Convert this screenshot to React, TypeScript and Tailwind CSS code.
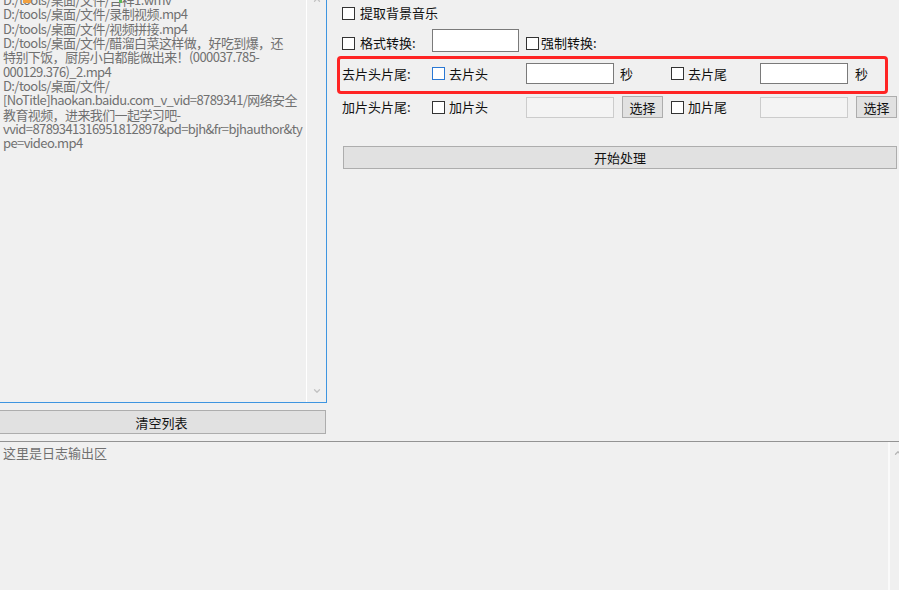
import { ChevronUp, ChevronDown } from 'lucide-react';

const listLines = [
  'D:/tools/桌面/文件/吉祥1.wmv',
  'D:/tools/桌面/文件/录制视频.mp4',
  'D:/tools/桌面/文件/视频拼接.mp4',
  'D:/tools/桌面/文件/醋溜白菜这样做，好吃到爆，还',
  '特别下饭，厨房小白都能做出来！(000037.785-',
  '000129.376)_2.mp4',
  'D:/tools/桌面/文件/',
  '[NoTitle]haokan.baidu.com_v_vid=8789341/网络安全',
  '教育视频，进来我们一起学习吧-',
  'vvid=8789341316951812897&pd=bjh&fr=bjhauthor&ty',
  'pe=video.mp4',
];

const Check = ({ label, gap = 'ml-[4px]', hover = false }: { label: string; gap?: string; hover?: boolean }) => (
  <div className="flex items-center">
    <span className={`block w-[13px] h-[13px] bg-white border ${hover ? 'border-[#2a78d4]' : 'border-[#333333]'}`} />
    <span className={`${gap} text-[13px] leading-[18px] text-[#111]`}>{label}</span>
  </div>
);

const TextBox = ({ disabled = false, w = 'w-[88px]', h = 'h-[21px]' }: { disabled?: boolean; w?: string; h?: string }) => (
  <div className={`${w} ${h} border ${disabled ? 'border-[#cccccc] bg-[#f4f4f4]' : 'border-[#7a7a7a] bg-white'}`} />
);

const WinButton = ({ label, className = '' }: { label: string; className?: string }) => (
  <button className={`flex items-center justify-center bg-[#e1e1e1] border border-[#adadad] text-[13px] text-[#111] leading-none ${className}`}>
    {label}
  </button>
);

export default function App() {
  return (
    <div className="w-[899px] h-[590px] overflow-hidden bg-[#f0f0f0] flex flex-col font-['Noto_Sans_CJK_SC',sans-serif]">
      <div className="h-[441px] flex shrink-0">
        {/* file list */}
        <div className="w-[327px] shrink-0 flex flex-col">
          <div className="h-[403px] flex border-r border-b border-[#3e95e0]">
            <div className="relative flex-1 overflow-hidden pl-[3px] text-[13px] leading-[14.33px] text-[#707070] tracking-[-0.6px]">
              <div className="-mt-[7px]">
                {listLines.map((l, i) => (
                  <div key={i} className="whitespace-nowrap">{l}</div>
                ))}
              </div>
              <span className="absolute left-[23px] top-0 w-[8px] h-[3px] bg-[#f0a040]" />
              <span className="absolute left-[119px] top-0 w-[3px] h-[3px] bg-[#5cb85c]" />
            </div>
            <div className="w-[20px] border-l border-white flex flex-col items-center justify-between">
              <ChevronUp className="w-[10px] h-[10px] -mt-[5px] text-[#c2c2c2]" strokeWidth={3} />
              <ChevronDown className="w-[10px] h-[10px] mb-[6px] text-[#c2c2c2]" strokeWidth={3} />
            </div>
          </div>
          <WinButton label="清空列表" className="mt-[7px] -ml-[3px] w-[329px] h-[24px]" />
        </div>

        {/* options */}
        <div className="flex-1 flex flex-col pl-[15px]">
          <div className="h-[26px] flex items-center">
            <Check label="提取背景音乐" gap="ml-[5px]" />
          </div>

          <div className="mt-[3px] flex items-start">
            <div className="w-[90px] mt-[5px]">
              <Check label="格式转换:" gap="ml-[5px]" />
            </div>
            <TextBox w="w-[87px]" h="h-[23px]" />
            <div className="ml-[7px] mt-[5px]">
              <Check label="强制转换:" gap="ml-[2px]" />
            </div>
          </div>

          <div className="mt-[4px] -ml-[5px] w-[551px] h-[38px] border-[3px] border-[#ff2424] rounded-[4px] pl-[2px] pt-[4px]">
            <div className="h-[21px] flex items-center text-[13px] text-[#111]">
              <span className="w-[90px]">去片头片尾:</span>
              <div className="w-[94px]">
                <Check label="去片头" hover />
              </div>
              <TextBox />
              <span className="w-[57px] pl-[6px]">秒</span>
              <div className="w-[89px]">
                <Check label="去片尾" />
              </div>
              <TextBox />
              <span className="pl-[7px]">秒</span>
            </div>
          </div>

          <div className="mt-[2px] h-[22px] flex items-center text-[13px] text-[#111]">
            <span className="w-[90px]">加片头片尾:</span>
            <div className="w-[94px]">
              <Check label="加片头" />
            </div>
            <TextBox disabled />
            <WinButton label="选择" className="ml-[8px] w-[41px] h-[22px]" />
            <div className="ml-[8px] w-[89px]">
              <Check label="加片尾" />
            </div>
            <TextBox disabled />
            <WinButton label="选择" className="ml-[8px] w-[41px] h-[22px]" />
          </div>

          <WinButton label="开始处理" className="mt-[28px] ml-[1px] w-[554px] h-[23px]" />
        </div>
      </div>

      {/* log */}
      <div className="flex-1 flex border-t border-[#939393]">
        <div className="flex-1 pl-[3px] pt-[4px] text-[13px] leading-[14.33px] text-[#707070]">
          这里是日志输出区
        </div>
        <div className="w-[11px] border-l-2 border-[#fafafa] pl-[3px]">
          <ChevronUp className="w-[10px] h-[10px] mt-[6px] text-[#b5b5b5]" strokeWidth={3} />
        </div>
      </div>
    </div>
  );
}
